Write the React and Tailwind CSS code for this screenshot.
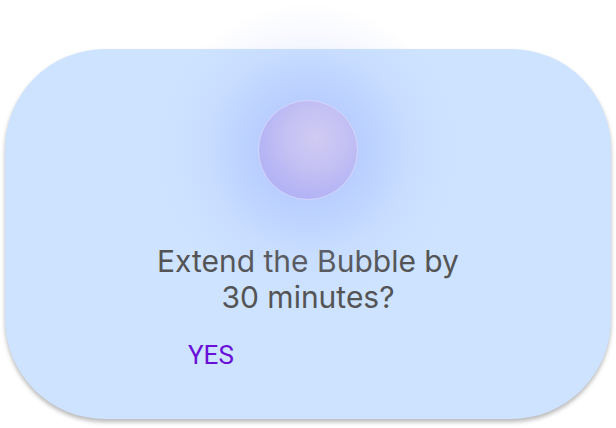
import React from 'react';

const App = () => {
  return (
    <div className="relative w-[616px] h-[428px] bg-white overflow-hidden" style={{ fontFamily: 'Inter, "Noto Sans", sans-serif' }}>
      <div className="mx-[5px] mt-[49px] h-[370px] rounded-[100px] bg-[#cde3ff] shadow-[0_3px_4px_rgba(0,0,0,0.28)] flex flex-col items-center">
        <div className="mt-[51px] w-[100px] h-[100px] rounded-full border border-[#d4d6fb] bg-[radial-gradient(circle_at_58%_38%,#d0cbf2_0%,#c5c1f3_35%,#a6a9f7_100%)] relative z-10" />
        <p className="mt-[43px] text-[30px] leading-[36px] text-[#545454] text-center w-[330px]">
          Extend the Bubble by 30 minutes?
        </p>
        <div className="self-start ml-[183px] mt-[26px] text-[26px] leading-[28px] text-[#6a0fd7] relative z-10" style={{ fontFamily: 'Roboto, sans-serif' }}>
          YES
        </div>
      </div>
      <div className="absolute left-[158px] top-[0px] w-[300px] h-[300px] rounded-full bg-[radial-gradient(circle,rgba(135,155,255,0.45)_0%,rgba(145,165,255,0.28)_30%,rgba(165,180,255,0.1)_50%,rgba(180,190,255,0)_70%)] pointer-events-none" />
    </div>
  );
};

export default App;
